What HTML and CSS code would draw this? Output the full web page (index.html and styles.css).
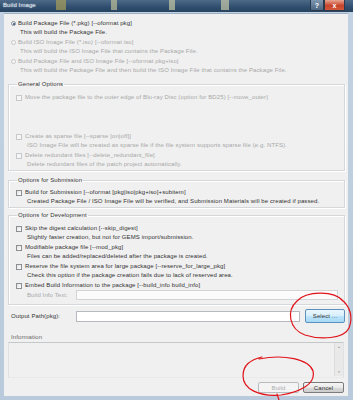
FILE: index.html
```html
<!DOCTYPE html>
<html>
<head>
<meta charset="utf-8">
<link rel="stylesheet" href="styles.css">
</head>
<body>
<div class="window">
  <div class="titlebar">
    <span class="title">Build Image</span>
    <span class="deskicon i1"></span>
    <span class="deskicon i2"></span>
    <span class="deskicon i3"></span>
    <span class="deskicon i4"></span>
    <span class="spacer"></span>
    <span class="tbtn help">?</span>
    <span class="tbtn close">x</span>
  </div>
  <div class="frame">
    <div class="client">
      <div class="radios">
        <div class="row"><span class="radio checked"></span><span>Build Package File (*.pkg) [--oformat pkg]</span></div>
        <div class="row desc">This will build the Package File.</div>
        <div class="row gap dis"><span class="radio"></span><span>Build ISO Image File (*.iso) [--oformat iso]</span></div>
        <div class="row desc dis">This will build the ISO Image File that contains the Package File.</div>
        <div class="row gap dis"><span class="radio"></span><span>Build Package File and ISO Image File [--oformat pkg+iso]</span></div>
        <div class="row desc dis">This will build the Package File and then build the ISO Image File that contains the Package File.</div>
      </div>

      <fieldset class="group general">
        <legend>General Options</legend>
        <div class="row first dis"><span class="check"></span><span>Move the package file to the outer edge of Blu-ray Disc (option for BD25) [--move_outer]</span></div>
        <div class="blank"></div>
        <div class="row dis"><span class="check"></span><span>Create as sparse file [--sparse [on|off]]</span></div>
        <div class="row cdesc dis">ISO Image File will be created as sparse file if the file system supports sparse file (e.g. NTFS).</div>
        <div class="row gap dis"><span class="check"></span><span>Delete redundant files [--delete_redundant_file]</span></div>
        <div class="row cdesc dis">Delete redundant files of the patch project automatically.</div>
      </fieldset>

      <fieldset class="group submission">
        <legend>Options for Submission</legend>
        <div class="row first"><span class="check"></span><span>Build for Submission [--oformat [pkg|iso|pkg+iso]+subitem]</span></div>
        <div class="row cdesc">Created Package File / ISO Image File will be verified, and Submission Materials will be created if passed.</div>
      </fieldset>

      <fieldset class="group dev">
        <legend>Options for Development</legend>
        <div class="row first"><span class="check"></span><span>Skip the digest calculation [--skip_digest]</span></div>
        <div class="row cdesc">Slightly faster creation, but not for GEMS import/submission.</div>
        <div class="row gap"><span class="check"></span><span>Modifiable package file [--mod_pkg]</span></div>
        <div class="row cdesc">Files can be added/replaced/deleted after the package is created.</div>
        <div class="row gap"><span class="check"></span><span>Reserve the file system area for large package [--reserve_for_large_pkg]</span></div>
        <div class="row cdesc">Check this option if the package creation fails due to lack of reserved area.</div>
        <div class="row gap"><span class="check"></span><span>Embed Build Information to the package [--build_info build_info]</span></div>
        <div class="inforow">
          <span class="ilabel dis">Build Info Text:</span>
          <span class="input infoinput"></span>
        </div>
      </fieldset>

      <div class="outrow">
        <span class="olabel">Output Path(pkg):</span>
        <span class="input outinput"></span>
        <span class="btn select">Select ...</span>
      </div>

      <div class="infolabel">Information</div>
      <div class="infobox">
        <div class="scroll"><span class="arr">&#9650;</span><span class="arr">&#9660;</span></div>
      </div>

      <div class="buttons">
        <span class="btn build">Build</span>
        <span class="btn cancel">Cancel</span>
      </div>
    </div>
  </div>
</div>
<svg class="marks" width="353" height="400" viewBox="0 0 353 400">
  <path d="M343 301 C334 290 306 291 297 301 C286 311 289 329 305 335 C320 340 344 339 349 328 C353 318 351 307 341 299" />
  <path d="M259 359 C284 354 309 359 313 371 C316 384 300 392 281 395 C259 397 243 389 243 376 C243 365 250 360 262 357 M277 394 L279 400" />
</svg>
</body>
</html>
```

FILE: styles.css
```css
html, body {
  margin: 0;
  padding: 0;
}
body {
  width: 353px;
  height: 400px;
  overflow: hidden;
  position: relative;
  font-family: "Liberation Sans", Arial, sans-serif;
  font-size: 6px;
  letter-spacing: 0.1px;
  color: #333;
  background: #2b4766;
}
.window {
  height: 400px;
  display: flex;
  flex-direction: column;
  background: linear-gradient(#c2d2e2, #b8cadb);
}
.titlebar {
  height: 12px;
  flex: none;
  display: flex;
  align-items: flex-start;
  background: linear-gradient(#4d6a88, #2f4d6e 60%, #27435f);
  position: relative;
}
.title {
  color: #eef3f8;
  font-size: 6px;
  line-height: 11px;
  padding-left: 3px;
  text-shadow: 0 0 2px #9fb4c9;
}
.deskicon {
  width: 7px;
  height: 10px;
  background: #b7b27c;
  opacity: 0.7;
}
.i1 { margin-left: 20px; width: 10px; background: #a89f58; }
.i2 { margin-left: 45px; width: 6px; background: #bdbf98; }
.i3 { margin-left: 52px; width: 6px; background: #c5c8a4; }
.i4 { margin-left: 46px; width: 8px; background: #c7c9a8; }
.spacer { flex: 1; }
.tbtn {
  height: 11px;
  color: #fff;
  font-size: 7px;
  line-height: 11px;
  text-align: center;
  font-weight: bold;
  border: 1px solid #2a3a4c;
  border-top: none;
  box-sizing: border-box;
}
.help {
  width: 14px;
  background: linear-gradient(#7f97b0, #4b6682);
  border-radius: 0 0 0 2px;
}
.close {
  width: 21px;
  margin-right: 8px;
  background: linear-gradient(#e8a593, #c7452c 55%, #d2583b);
  border-radius: 0 0 2px 0;
}
.frame {
  flex: 1;
  display: flex;
  padding: 1px 6px 4px 4px;
}
.client {
  flex: 1;
  background: #f0f0f0;
  border-top: 1px solid #9eb0c3;
  padding: 0 3px 0 4px;
  display: flex;
  flex-direction: column;
}
.row {
  height: 9px;
  line-height: 9px;
  display: flex;
  align-items: center;
  white-space: nowrap;
}
.dis { color: #a8a8a8; }
.radios {
  margin-top: 5px;
  padding-left: 3px;
}
.radios .desc { padding-left: 9px; }
.gap { margin-top: 1px; }
.radio {
  width: 5px;
  height: 5px;
  border: 1px solid #8d8f91;
  border-radius: 50%;
  box-sizing: border-box;
  background: radial-gradient(#fff, #e0e3e6);
  margin-right: 2px;
  flex: none;
  position: relative;
}
.dis .radio { border-color: #c6c8ca; background: #f4f4f4; }
.radio.checked::after {
  content: "";
  position: absolute;
  left: 0.5px;
  top: 0.5px;
  width: 2px;
  height: 2px;
  border-radius: 50%;
  background: #1f4f8e;
}
.check {
  width: 6px;
  height: 6px;
  border: 1px solid #8d8f91;
  box-sizing: border-box;
  background: linear-gradient(135deg, #dfe2e5, #fff);
  margin-right: 3px;
  flex: none;
}
.dis .check { border-color: #c8c9ca; background: #f5f5f5; }
.group {
  margin: 5px 0 0 0;
  padding: 0 2px 1px 7px;
  border: 1px solid #d5d8db;
  box-shadow: inset 1px 1px 0 #fff, 1px 1px 0 #fff;
  min-width: 0;
}
.group legend {
  padding: 0 1px;
  margin-left: 1px;
  height: 9px;
  line-height: 9px;
  color: #333;
}
.group .first { margin-top: 4px; }
.cdesc { padding-left: 11px; }
.blank { height: 30px; }
.submission { margin-top: 5px; }
.submission .first { margin-top: 3px; }
.dev { margin-top: 3px; padding-bottom: 4px; }
.inforow {
  display: flex;
  align-items: center;
  height: 10px;
  padding-left: 11px;
}
.ilabel { width: 49px; flex: none; white-space: nowrap; }
.input {
  display: block;
  background: #fff;
  border: 1px solid #b5b9bd;
  box-sizing: border-box;
}
.infoinput {
  width: 262px;
  height: 10px;
  border-color: #d2d4d6;
  background: #fbfbfb;
}
.outrow {
  display: flex;
  align-items: center;
  height: 14px;
  margin-top: 4px;
  padding-left: 3px;
}
.olabel { width: 65px; flex: none; white-space: nowrap; }
.outinput {
  width: 224px;
  height: 11px;
}
.btn {
  display: flex;
  align-items: center;
  justify-content: center;
  box-sizing: border-box;
  border-radius: 2px;
}
.select {
  width: 40px;
  height: 14px;
  margin-left: 5px;
  border: 1px solid #5b90bf;
  background: linear-gradient(#eaf6fd, #d7effc 50%, #bde5fb 51%, #a7d9f5);
  color: #333;
}
.infolabel {
  height: 9px;
  line-height: 9px;
  margin-top: 10px;
  padding-left: 3px;
  color: #666;
}
.infobox {
  height: 36px;
  box-sizing: border-box;
  border-top: 1px solid #c5c8cb;
  border-left: 1px solid #dfe2e4;
  border-right: 1px solid #dfe2e4;
  border-bottom: 1px solid #e9e9e9;
  display: flex;
  justify-content: flex-end;
  padding: 0 0 1px 0;
  margin-right: 1px;
}
.scroll {
  width: 8px;
  display: flex;
  flex-direction: column;
  justify-content: space-between;
  align-items: center;
  background: #e9e9e9;
  border-left: 1px solid #dcdcdc;
  font-size: 3px;
  color: #9a9a9a;
  padding: 2px 0;
}
.arr { line-height: 4px; }
.buttons {
  display: flex;
  justify-content: flex-end;
  gap: 4px;
  margin-top: 4px;
  margin-right: 1px;
}
.build, .cancel {
  width: 41px;
  height: 11px;
}
.build {
  border: 1px solid #b9bcbf;
  background: #f4f4f4;
  color: #acacac;
}
.cancel {
  border: 1px solid #7b7b7b;
  background: linear-gradient(#f6f6f6, #e8e8e8 50%, #d9d9d9 51%, #cdcdcd);
  color: #333;
}
.marks {
  position: absolute;
  left: 0;
  top: 0;
  pointer-events: none;
}
.marks path {
  fill: none;
  stroke: #e0141a;
  stroke-width: 1.2;
  stroke-linecap: round;
}
```
